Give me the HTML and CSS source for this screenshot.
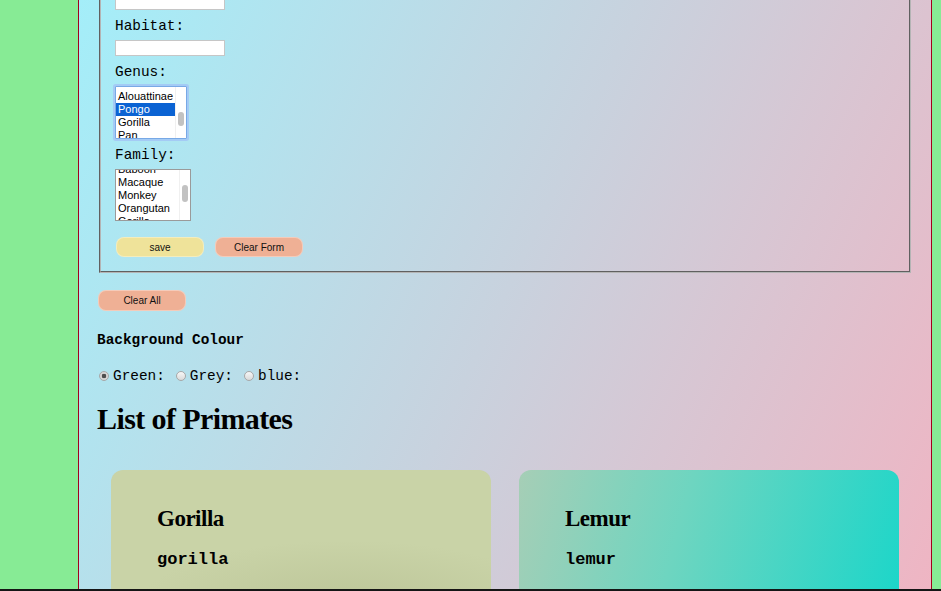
FILE: index.html
```html
<!DOCTYPE html>
<html lang="en">
<head>
<meta charset="utf-8">
<title>Primates</title>
<link rel="stylesheet" href="styles.css">
</head>
<body>
<div class="viewport">
  <main class="page">
    <form class="primate-form">
      <fieldset class="form-box">
        <div class="form-body">
          <div class="field">
            <label class="field-label" for="name">Name:</label>
            <input class="text-input" id="name" type="text">
          </div>
          <div class="field">
            <label class="field-label" for="habitat">Habitat:</label>
            <input class="text-input" id="habitat" type="text">
          </div>
          <div class="field">
            <span class="field-label">Genus:</span>
            <div class="listbox listbox-genus" role="listbox" aria-label="Genus">
              <ul class="options options-genus">
                <li>Alouattinae</li>
                <li class="selected">Pongo</li>
                <li>Gorilla</li>
                <li>Pan</li>
              </ul>
              <div class="scrolltrack track-genus"><span class="thumb thumb-genus"></span></div>
            </div>
          </div>
          <div class="field">
            <span class="field-label">Family:</span>
            <div class="listbox listbox-family" role="listbox" aria-label="Family">
              <ul class="options options-family">
                <li>Baboon</li>
                <li>Macaque</li>
                <li>Monkey</li>
                <li>Orangutan</li>
                <li>Gorilla</li>
              </ul>
              <div class="scrolltrack track-family"><span class="thumb thumb-family"></span></div>
            </div>
          </div>
          <div class="form-actions">
            <button type="button" class="btn btn-save">save</button>
            <button type="button" class="btn btn-clear">Clear Form</button>
          </div>
        </div>
      </fieldset>
    </form>
    <button type="button" class="btn btn-clear btn-clear-all">Clear All</button>
    <h4 class="bg-title">Background Colour</h4>
    <div class="radio-row">
      <label class="radio-option"><input type="radio" name="bg" class="radio" checked><span>Green:</span></label>
      <label class="radio-option"><input type="radio" name="bg" class="radio"><span>Grey:</span></label>
      <label class="radio-option"><input type="radio" name="bg" class="radio"><span>blue:</span></label>
    </div>
    <h2 class="list-title">List of Primates</h2>
    <div class="cards">
      <article class="card card-gorilla">
        <h3 class="card-title">Gorilla</h3>
        <p class="card-sub">gorilla</p>
      </article>
      <article class="card card-lemur">
        <h3 class="card-title">Lemur</h3>
        <p class="card-sub">lemur</p>
      </article>
    </div>
  </main>
</div>
<div class="bottom-edge"></div>
</body>
</html>
```

FILE: styles.css
```css
* { box-sizing: border-box; }

html, body {
  margin: 0;
  padding: 0;
  height: 100%;
}

body {
  background: #87eb95;
  display: flex;
  flex-direction: column;
  overflow: hidden;
  font-family: "Liberation Mono", "Courier New", monospace;
  color: #000;
}

.viewport {
  flex: 1;
  min-height: 0;
  overflow: hidden;
  display: flex;
}

.page {
  margin-left: 78px;
  width: 854px;
  flex: none;
  border-left: 1px solid #a3001c;
  border-right: 1px solid #a3001c;
  padding: 0 18px;
  background: linear-gradient(115deg, #a4eef9 0%, #c8d2de 50%, #efb5c3 100%);
  display: flex;
  flex-direction: column;
  align-items: flex-start;
}

.page > * { flex: none; }

.primate-form {
  align-self: stretch;
  margin: 0;
}

.form-box {
  margin: -40px 2px 0;
  padding: 10px 14px 14px;
  border: 2px groove #b4b4b4;
  min-width: 0;
}

.form-body {
  display: flex;
  flex-direction: column;
  gap: 8px;
}

.field {
  display: flex;
  flex-direction: column;
  align-items: flex-start;
  gap: 6px;
}

.field-label {
  font-size: 14.4px;
  line-height: 16px;
}

.text-input {
  width: 110px;
  height: 16px;
  border: 1px solid #c6c6c6;
  background: #fff;
  padding: 0;
  margin: 0;
}

.listbox {
  display: flex;
  flex: none;
  background: #fff;
  overflow: hidden;
  font-family: "Liberation Sans", Arial, sans-serif;
  font-size: 11px;
  line-height: 13px;
}

.listbox-genus {
  width: 72px;
  height: 53px;
  border: 1px solid #78a9e6;
  box-shadow: 0 0 0 2px #a4cbf5;
  border-radius: 1px;
}

.listbox-family {
  width: 76px;
  height: 52px;
  border: 1px solid #9a9a9a;
}

.options {
  flex: 1;
  list-style: none;
  margin: 0;
  padding: 0;
  min-width: 0;
}

.options li {
  height: 13px;
  padding-left: 2px;
  white-space: nowrap;
  color: #000;
}

.options .selected {
  background: #0b63d3;
  color: #fff;
}

.options-genus { padding-top: 3px; }
.options-family { margin-top: -7px; }

.scrolltrack {
  flex: none;
  width: 11px;
  background: #fff;
  border-left: 1px solid #f0f0f0;
}

.thumb {
  display: block;
  width: 6px;
  background: #c2c2c2;
  border-radius: 3px;
}

.track-genus { padding-top: 25px; }
.thumb-genus { height: 14px; margin-left: 2px; }

.track-family { padding-top: 15px; }
.thumb-family { height: 17px; margin-left: 2px; }

.form-actions {
  display: flex;
  gap: 11px;
  margin-top: 8px;
  padding-left: 1px;
}

.btn {
  flex: none;
  width: 88px;
  height: 20px;
  border-radius: 8px;
  border: 1px solid rgba(255, 255, 255, 0.35);
  font-family: "Liberation Sans", Arial, sans-serif;
  font-size: 10px;
  color: #111;
  padding: 0;
  margin: 0;
}

.btn-save { background: #efe39a; }
.btn-clear { background: #efb095; }

.btn-clear-all {
  margin: 17px 0 0 1px;
  height: 21px;
}

.bg-title {
  margin: 21px 0 0;
  font-size: 14.4px;
  line-height: 16px;
  font-weight: bold;
}

.radio-row {
  display: flex;
  gap: 11px;
  margin-top: 20px;
  height: 16px;
  font-size: 14.4px;
  line-height: 16px;
}

.radio-option {
  display: flex;
  align-items: center;
  gap: 4px;
}

.radio {
  appearance: none;
  -webkit-appearance: none;
  width: 10px;
  height: 10px;
  margin: 0;
  border: 1px solid #a8a8a8;
  border-radius: 50%;
  background: linear-gradient(#f7f7f7, #dadada);
}

.radio-option:first-child .radio { margin-left: 2px; }

.radio:checked {
  background: radial-gradient(circle, #4e4e4e 0 2px, #d6d6d6 2.6px);
}

.list-title {
  margin: 18px 0 0;
  font-family: "Liberation Serif", "Times New Roman", serif;
  font-size: 30px;
  line-height: 34px;
  letter-spacing: -0.6px;
  font-weight: bold;
}

.cards {
  align-self: stretch;
  display: grid;
  grid-template-columns: 380px 380px;
  gap: 28px;
  margin-top: 34px;
  padding-left: 14px;
}

.card {
  border-radius: 12px;
  padding: 35px 46px;
  min-height: 220px;
}

.card-gorilla {
  background:
    radial-gradient(ellipse 55% 30% at 62% 62%, rgba(178, 186, 140, 0.55), rgba(178, 186, 140, 0) 100%),
    #c9d3a7;
}

.card-lemur {
  background: linear-gradient(105deg, #a6ceb6 0%, #6ed5c0 40%, #14d6ca 100%);
}

.card-title {
  margin: 0;
  font-family: "Liberation Serif", "Times New Roman", serif;
  font-size: 23px;
  line-height: 28px;
  letter-spacing: -0.5px;
  font-weight: bold;
}

.card-sub {
  margin: 17px 0 0;
  font-size: 17px;
  line-height: 20px;
  font-weight: bold;
}

.bottom-edge {
  flex: none;
  height: 2px;
  background: #151515;
}
```
